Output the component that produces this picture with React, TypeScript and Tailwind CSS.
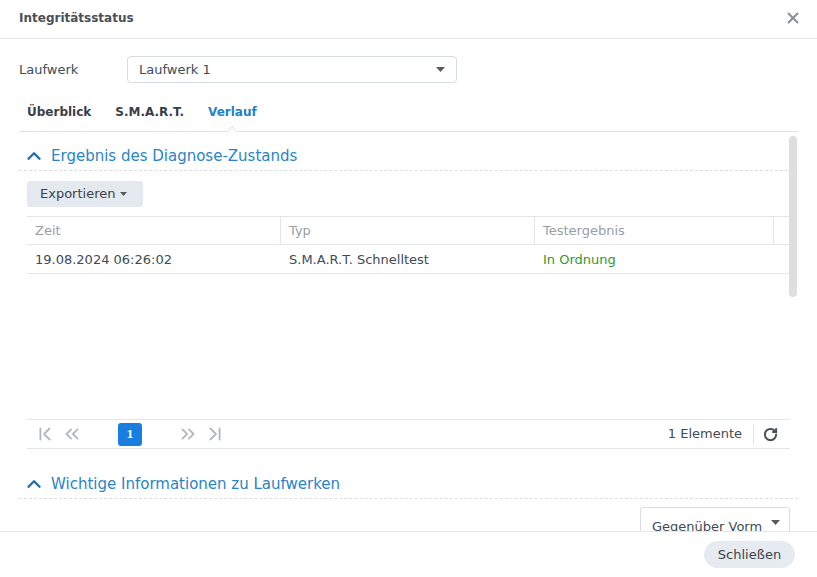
import {
  X,
  ChevronUp,
  ChevronFirst,
  ChevronLast,
  ChevronsLeft,
  ChevronsRight,
  RotateCw,
} from "lucide-react";

function Caret({ className = "" }: { className?: string }) {
  return (
    <svg width="9" height="5" viewBox="0 0 9 5" className={className}>
      <path d="M0 0h9L4.5 5z" fill="currentColor" />
    </svg>
  );
}

function SectionHeader({ title }: { title: string }) {
  return (
    <div className="mx-[19px] h-[30px] flex items-center border-b border-dashed border-[#d9dee3] text-[#2a84c6]">
      <ChevronUp className="w-[22px] h-[22px] ml-[4px] mr-[6px] text-[#1f6fae]" strokeWidth={2.6} />
      <span className="text-[15px] pt-[1px]">{title}</span>
    </div>
  );
}

export default function App() {
  return (
    <div className="w-[817px] h-[577px] bg-white flex flex-col font-['DejaVu_Sans',sans-serif] text-[13px] text-[#414b55] overflow-hidden">
      {/* header */}
      <div className="h-[39px] shrink-0 border-b border-[#e3e7eb] px-[19px] pb-[2px] flex items-center justify-between">
        <span className="text-[12px] font-bold text-[#4a5057]">Integritätsstatus</span>
        <X className="w-[18px] h-[18px] text-[#8a8f94] -mr-[4px]" strokeWidth={2.6} />
      </div>

      <div className="px-[19px] shrink-0">
        <div className="mt-[17px] flex items-center">
          <span className="w-[108px]">Laufwerk</span>
          <div className="w-[330px] h-[27px] border border-[#d8dde2] rounded-[4px] px-[11px] flex items-center justify-between">
            <span>Laufwerk 1</span>
            <Caret className="text-[#555b61]" />
          </div>
        </div>

        {/* tabs */}
        <div className="mt-[11px] h-[38px] border-b border-[#dfe3e7] flex items-center text-[12px] font-bold">
          <div className="px-[8px] text-[#3a3f45] pb-[1px]">Überblick</div>
          <div className="pl-[16px] pr-[12px] text-[#3a3f45] pb-[1px]">S.M.A.R.T.</div>
          <div className="relative h-full flex items-center px-[12px] pb-[1px] text-[#1f7fcb]">
            Verlauf
            <div className="absolute z-10 left-1/2 -bottom-[5px] -ml-[4px] w-[8px] h-[8px] rotate-45 bg-white border-l border-t border-[#dfe3e7]" />
          </div>
        </div>
      </div>

      {/* scroll area */}
      <div className="relative flex-1 overflow-hidden">
        <div className="absolute right-[20px] top-[4px] w-[8px] h-[161px] rounded-full bg-[#dedede]" />

        <div className="mt-[9px]">
          <SectionHeader title="Ergebnis des Diagnose-Zustands" />
        </div>

        <div className="px-[27px]">
          <div className="mt-[10px] w-[116px] h-[26px] rounded-[3px] bg-[#e4e9ef] flex items-center pl-[13px] gap-[5px] text-[#3c434a]">
            Exportieren
            <svg width="7" height="4" viewBox="0 0 7 4">
              <path d="M0 0h7L3.5 4z" fill="#555b61" />
            </svg>
          </div>

          {/* table */}
          <div className="mt-[9px] w-[763px]">
            <div className="h-[29px] border-t border-b border-[#e2e6ea] flex text-[#989ea4]">
              <div className="w-[254px] border-r border-[#e2e6ea] px-[8px] flex items-center">Zeit</div>
              <div className="w-[254px] border-r border-[#e2e6ea] px-[8px] flex items-center">Typ</div>
              <div className="w-[239px] border-r border-[#e2e6ea] px-[8px] flex items-center">Testergebnis</div>
              <div className="flex-1" />
            </div>
            <div className="h-[29px] border-b border-[#e2e6ea] flex">
              <div className="w-[254px] px-[8px] pt-[1px] flex items-center">19.08.2024 06:26:02</div>
              <div className="w-[254px] px-[8px] pt-[1px] flex items-center">S.M.A.R.T. Schnelltest</div>
              <div className="w-[239px] px-[8px] pt-[1px] flex items-center text-[#2f9a2f]">In Ordnung</div>
            </div>
            <div className="h-[145px]" />

            {/* pagination */}
            <div className="h-[30px] border-t border-b border-[#e2e6ea] flex items-center text-[#b3b8bd]">
              <ChevronFirst className="w-[22px] h-[22px] ml-[7px]" strokeWidth={2} />
              <ChevronsLeft className="w-[22px] h-[22px] ml-[5px]" strokeWidth={2} />
              <div className="ml-[35px] w-[24px] h-[23px] rounded-[3px] bg-[#1a7de0] text-white font-bold text-[13px] flex items-center justify-center font-['Liberation_Serif',serif]">
                1
              </div>
              <ChevronsRight className="w-[22px] h-[22px] ml-[35px]" strokeWidth={2} />
              <ChevronLast className="w-[22px] h-[22px] ml-[5px]" strokeWidth={2} />
              <div className="flex-1" />
              <span className="text-[#414b55]">1 Elemente</span>
              <div className="ml-[11px] w-px h-[21px] bg-[#e2e6ea]" />
              <RotateCw className="w-[15px] h-[15px] ml-[9px] mr-[12px] text-[#4a5057]" strokeWidth={3.2} />
            </div>
          </div>
        </div>

        <div className="mt-[20px]">
          <SectionHeader title="Wichtige Informationen zu Laufwerken" />
        </div>

        <div className="px-[27px] flex justify-end">
          <div className="mt-[8px] w-[150px] h-[36px] shrink-0 border border-[#d8dde2] rounded-[3px] pl-[11px] pr-[9px] flex items-center justify-between">
            <span className="whitespace-nowrap overflow-hidden pt-[3px]">Gegenüber Vorm</span>
            <Caret className="text-[#555b61] shrink-0 -mt-[6px]" />
          </div>
        </div>
      </div>

      {/* footer */}
      <div className="h-[46px] shrink-0 border-t border-[#e3e7eb] flex items-center justify-end pr-[22px]">
        <div className="w-[91px] h-[27px] rounded-full bg-[#e6ebf2] flex items-center justify-center text-[#3c434a]">
          Schließen
        </div>
      </div>
    </div>
  );
}
